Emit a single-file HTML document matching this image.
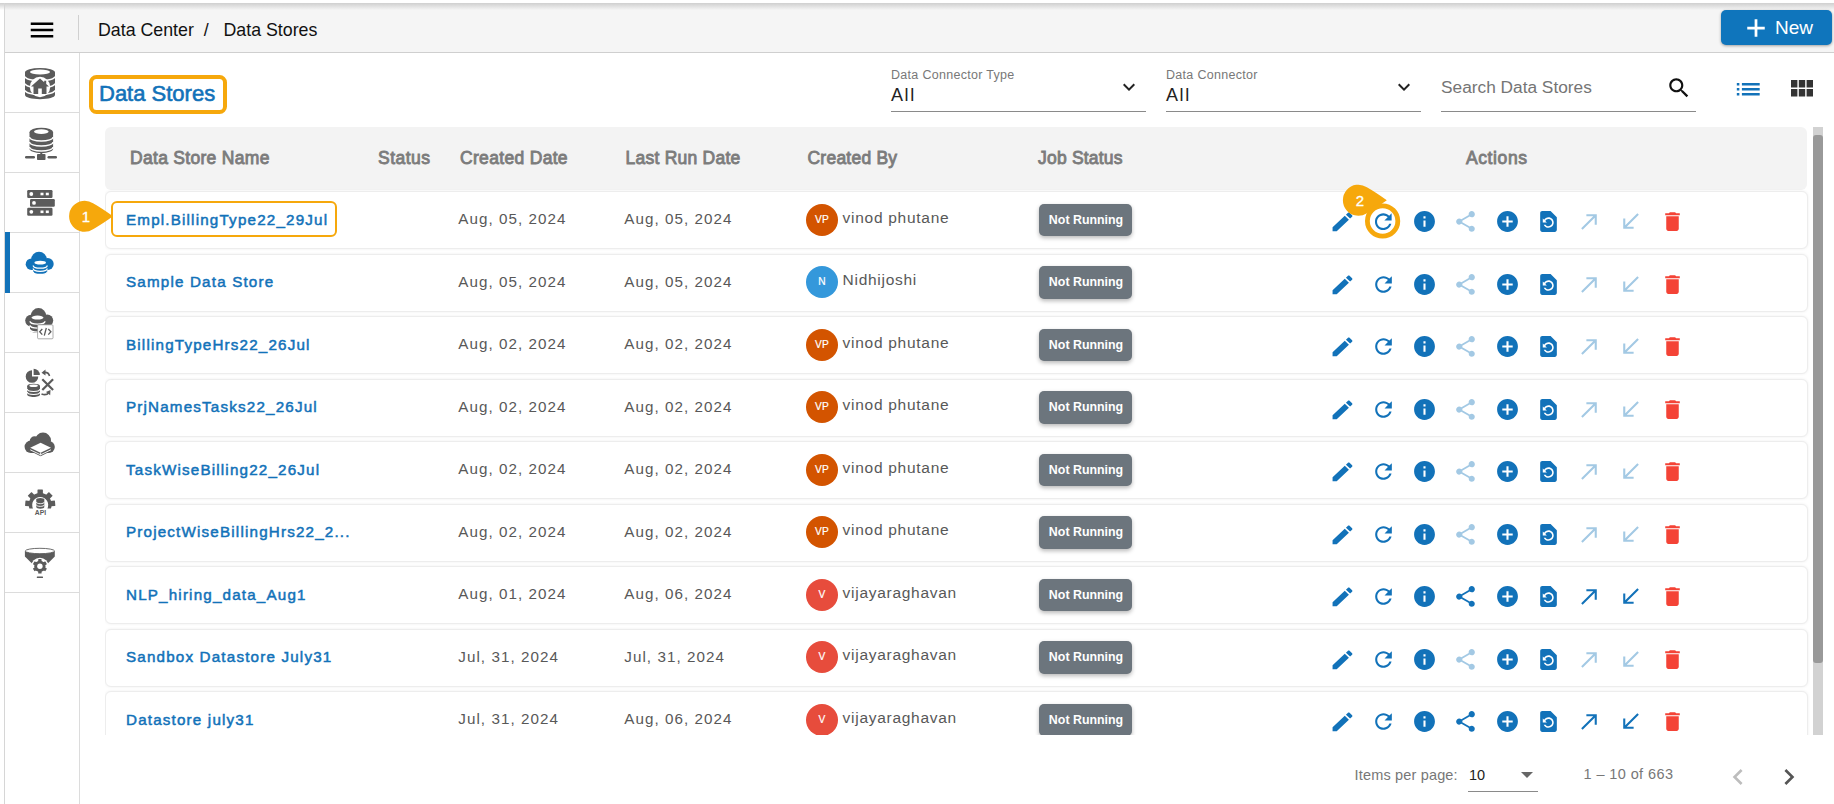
<!DOCTYPE html>
<html><head><meta charset="utf-8"><title>Data Stores</title>
<style>
*{box-sizing:border-box;margin:0;padding:0}
html,body{width:1834px;height:804px;overflow:hidden;background:#fff;font-family:"Liberation Sans",sans-serif;color:#212121}
.abs{position:absolute}
#top{position:absolute;left:5px;top:3px;width:1829px;height:50px;background:#f5f5f5;border-bottom:1px solid #cfcfcf}
#topsh{position:absolute;left:0;top:3px;width:1834px;height:7px;background:linear-gradient(#cfcfcf,rgba(245,245,245,0))}
#lline{position:absolute;left:4px;top:3px;width:1px;height:801px;background:#d6d6d6}
#crumb{position:absolute;left:98px;top:19px;font-size:17.8px;line-height:22px;color:#111;white-space:pre}
#vdiv{position:absolute;left:78px;top:15px;width:1px;height:25px;background:#d0d0d0}
#newb{position:absolute;left:1721px;top:10px;width:111px;height:35px;background:#0f75bc;border-radius:5px;box-shadow:0 1px 3px rgba(0,0,0,.35);color:#fff;font-size:19px}
#newb span{position:absolute;left:54px;top:7px;line-height:22px}
#side{position:absolute;left:5px;top:53px;width:75px;height:751px;border-right:1px solid #dcdcdc;background:#fff}
.si{position:absolute;left:0;width:74px;height:60px;border-bottom:1px solid #dcdcdc}
.si svg{position:absolute;left:0;top:0;width:74px;height:60px}
#title{position:absolute;left:89px;top:75px;width:138px;height:39px;border:4px solid #f6a80c;border-radius:7.5px;}
#title span{position:absolute;left:6px;top:2.3px;font-size:22px;line-height:26px;color:#1272b9;-webkit-text-stroke:.6px #1272b9;white-space:nowrap}
.fl{position:absolute;top:62px;width:255px;height:50px;border-bottom:1px solid #8a8a8a}
.fl .lb{position:absolute;left:0;top:6px;font-size:12.5px;line-height:15px;color:#787878;white-space:nowrap;letter-spacing:.3px}
.fl .vl{position:absolute;left:0;top:23px;font-size:18px;line-height:20px;color:#222;letter-spacing:1.6px}
.fl svg{position:absolute;right:5px;top:13px;width:24px;height:24px}
#srch .ph{position:absolute;left:0;top:15px;font-size:17.3px;line-height:20px;color:#757575;white-space:nowrap}
#thead{position:absolute;left:105px;top:127px;width:1702px;height:63px;background:#f3f3f3;border-radius:6px}
#thead span{position:absolute;top:21px;font-size:17.5px;line-height:20px;color:#7c7c7c;-webkit-text-stroke:.85px #7c7c7c;white-space:nowrap}
#rows{position:absolute;left:104.6px;top:0;width:1712px;height:735px;overflow:hidden}
#rows .in{position:absolute;left:0;top:0;width:1702px}
.row{position:absolute;left:0;width:1703.4px;height:58px;border:1px solid #ededed;border-radius:6px;background:#fff;box-shadow:0 0 3px rgba(0,0,0,.07)}
.row span{position:absolute;white-space:nowrap}
.nm{left:20.4px;top:17.3px;font-size:15.2px;line-height:20px;color:#1272b9;-webkit-text-stroke:.5px #1272b9;letter-spacing:1.18px}
.dt{top:17.2px;font-size:15.2px;line-height:20px;color:#585858;letter-spacing:1.05px}
.un{left:737px;top:15.4px;font-size:15.5px;line-height:20px;color:#585858;letter-spacing:.72px}
.av{left:700.3px;top:11.5px;width:32px;height:32px;border-radius:50%;color:#fff;font-size:10.2px;line-height:32px;text-align:center;-webkit-text-stroke:.2px #fff}
.bd{left:933.6px;top:11.6px;width:92.7px;height:32.2px;padding-left:1px;border-radius:5px;background:#6c757d;color:#fff;font-weight:bold;font-size:12.4px;line-height:33.5px;text-align:center;box-shadow:0 2px 4px rgba(0,0,0,.28)}
.ic{position:absolute;top:16.85px;overflow:visible;width:25px;height:25px}
#sbt{position:absolute;left:1813px;top:127px;width:9.6px;height:608px;background:#d2d2d2}
#sbh{position:absolute;left:1813px;top:134.5px;width:9.6px;height:528px;background:#999;border-radius:3px}
.mkn{position:absolute;width:40px;height:36px;font-size:15px;line-height:36px;text-align:center;color:#fff;-webkit-text-stroke:.3px #fff}
#pg span{position:absolute;font-size:14.5px;line-height:18px;color:#777;white-space:nowrap}
</style></head><body>
<div id="top"></div><div id="topsh"></div><div id="lline"></div>
<svg class="abs" style="left:27px;top:15px;width:30px;height:30px" viewBox="0 0 24 24" fill="#000"><path d="M3 18h18v-2H3v2zm0-5h18v-2H3v2zm0-7v2h18V6H3z"/></svg>
<div id="vdiv"></div>
<div id="crumb">Data Center  /   Data Stores</div>
<div id="newb"><svg class="abs" style="left:19.900px;top:2.900px;width:30px;height:30px" viewBox="0 0 24 24" fill="#fff"><path d="M19 13.100h-5.900v5.900h-2.200v-5.900H5v-2.200h5.900V5h2.200v5.900H19z"/></svg><span>New</span></div>
<div id="side">
<div class="si" style="top:0"><svg viewBox="0 0 74 60">
<g fill="#5b5b5b"><path d="M20 19.300v22.700c0 2.300 6.700 4.200 15 4.200s15-1.900 15-4.200V19.300z"/><ellipse cx="35" cy="19.300" rx="15" ry="4.300"/></g>
<ellipse cx="35" cy="19" rx="10" ry="2.500" fill="#fff"/>
<g fill="none" stroke="#fff" stroke-width="1.600"><path d="M20 23.600c0 2.300 6.700 4.200 15 4.200s15-1.900 15-4.200"/><path d="M20 30.600c0 2.300 6.700 4.200 15 4.200s15-1.900 15-4.200"/><path d="M20 37.200c0 2.300 6.700 4.200 15 4.200s15-1.900 15-4.200"/></g>
<circle cx="35" cy="34" r="10.200" fill="#fff"/>
<path fill="#5b5b5b" d="M35 25.500l-9 8h2.500v7.500h4.700v-5.500h3.600v5.500h4.700v-7.500h2.500l-2.800-2.500v-3.300h-2v1.500z"/>
</svg></div>
<div class="si" style="top:60px"><svg viewBox="0 0 74 60">
<g fill="#5b5b5b"><path d="M24.500 19v17c0 2.300 5.300 4 11.800 4s11.800-1.700 11.800-4V19z"/><ellipse cx="36.300" cy="19" rx="11.800" ry="4.300"/>
<rect x="35.300" y="38" width="2" height="5"/><rect x="32" y="41" width="8.500" height="6" rx="0.800"/><rect x="20" y="43" width="10" height="2.400" rx="1.200"/><rect x="42.500" y="43" width="9.500" height="2.400" rx="1.200"/></g>
<ellipse cx="36.300" cy="18.600" rx="7.300" ry="2.300" fill="#fff"/>
<g fill="none" stroke="#fff" stroke-width="1.400"><path d="M24.500 24c0 2.300 5.300 4 11.800 4s11.800-1.700 11.800-4"/><path d="M24.500 29c0 2.300 5.300 4 11.800 4s11.800-1.700 11.800-4"/><path d="M24.500 34c0 2.300 5.300 4 11.800 4s11.800-1.700 11.800-4"/></g>
</svg></div>
<div class="si" style="top:120px"><svg viewBox="0 0 74 60">
<g fill="#5b5b5b"><rect x="22.200" y="17" width="25.300" height="8" rx="1.200"/><rect x="25" y="26" width="24.800" height="7.800" rx="1.200"/><rect x="22.200" y="34.800" width="25.300" height="8" rx="1.200"/></g>
<g fill="#fff"><circle cx="26.300" cy="21" r="1.900"/><circle cx="29" cy="29.900" r="1.900"/><circle cx="26.300" cy="38.800" r="1.900"/><rect x="35.500" y="19.700" width="3" height="2.600"/><rect x="40.800" y="19.700" width="3" height="2.600"/><rect x="35.500" y="37.500" width="3" height="2.600"/><rect x="40.800" y="37.500" width="3" height="2.600"/></g>
</svg></div>
<div class="si" style="top:180px"><div class="abs" style="left:0;top:-1px;width:5px;height:61px;background:#1272b9"></div><svg viewBox="0 0 74 60">
<g fill="#1272b9"><circle cx="26.500" cy="31.200" r="5.800"/><circle cx="34" cy="26.500" r="7.800"/><circle cx="42.700" cy="31" r="6"/><rect x="26.500" y="30" width="16.200" height="7"/></g>
<g fill="#1272b9"><path d="M28.200 30v9c0 1.500 3.100 2.700 7 2.700s7-1.200 7-2.700V30z"/></g>
<ellipse cx="35.200" cy="29.700" rx="5.800" ry="1.900" fill="#fff"/>
<g fill="none" stroke="#fff" stroke-width="1.300"><path d="M28.200 32.500c0 1.500 3.100 2.700 7 2.700s7-1.200 7-2.700"/><path d="M28.200 35.600c0 1.500 3.100 2.700 7 2.700s7-1.200 7-2.700"/><path d="M28.200 38.700c0 1.500 3.100 2.700 7 2.700s7-1.200 7-2.700"/></g>
</svg></div>
<div class="si" style="top:240px"><svg viewBox="0 0 74 60">
<g fill="#5b5b5b"><circle cx="26" cy="27.600" r="5.800"/><circle cx="33.500" cy="22.900" r="7.800"/><circle cx="42.200" cy="27.400" r="6"/><rect x="26" y="26.400" width="16.200" height="7"/></g>
<path fill="#5b5b5b" d="M25 25v12c0 1.600 3.400 2.900 7.500 2.900s7.500-1.300 7.500-2.900V25z"/>
<ellipse cx="32.500" cy="24.600" rx="6" ry="2" fill="#fff"/>
<g fill="none" stroke="#fff" stroke-width="1.300"><path d="M25 28.300c0 1.600 3.400 2.900 7.500 2.900s7.500-1.300 7.500-2.900"/><path d="M25 32.300c0 1.600 3.400 2.900 7.500 2.900s7.500-1.300 7.500-2.900"/><path d="M25 36.300c0 1.600 3.400 2.900 7.500 2.900s7.500-1.300 7.500-2.900"/></g>
<rect x="32.600" y="31.800" width="15.400" height="14" rx="1" fill="#fff" stroke="#8a8a8a" stroke-width="0.700"/>
<g fill="none" stroke="#5b5b5b" stroke-width="1.300"><path d="M37.300 36l-2.600 2.800l2.600 2.800"/><path d="M43.300 36l2.600 2.800l-2.600 2.800"/><path d="M41.300 35l-2 7.600"/></g>
</svg></div>
<div class="si" style="top:300px"><svg viewBox="0 0 74 60">
<path fill="#5b5b5b" d="M27 17.200v6.300h6.300a6.300 6.300 0 1 1-6.300-6.300z"/><path fill="#5b5b5b" d="M28.600 15.800a6.200 6.200 0 0 1 6.200 6.200h-6.200z"/>
<path fill="#5b5b5b" d="M22.200 33v8.500c0 1.400 2.900 2.500 6.400 2.500s6.400-1.100 6.400-2.500V33z"/><ellipse cx="28.600" cy="33" rx="6.400" ry="2.300" fill="#5b5b5b"/>
<ellipse cx="28.600" cy="32.800" rx="4.300" ry="1.200" fill="#fff"/>
<g fill="none" stroke="#fff" stroke-width="1.100"><path d="M22.200 36c0 1.400 2.900 2.500 6.400 2.500s6.400-1.100 6.400-2.500"/><path d="M22.200 39c0 1.400 2.900 2.500 6.400 2.500s6.400-1.100 6.400-2.500"/></g>
<g fill="none" stroke="#5b5b5b" stroke-width="2.200"><path d="M37.300 26.200l10.800 10.800M48.100 26.200l-10.800 10.800"/></g>
<g fill="none" stroke="#5b5b5b" stroke-width="1.600"><path d="M38.500 19.500c3.500-.5 5.500 1 6 3.500"/><path d="M44 39.500c-2 2.500-5 2.500-7.500 1.500"/></g>
<path fill="#5b5b5b" d="M36.500 19.700l4-3.200v6z"/><path fill="#5b5b5b" d="M45.500 37l-.3 5.200l-4.300-3.200z"/>
</svg></div>
<div class="si" style="top:360px"><svg viewBox="0 0 74 60">
<g fill="#5b5b5b"><circle cx="25.800" cy="33.800" r="6.200"/><circle cx="29.700" cy="28.300" r="5"/><circle cx="38" cy="27.600" r="8"/><circle cx="43.800" cy="34" r="6"/><rect x="25.800" y="32" width="18" height="8"/><path d="M25 38l10.600 5.200l10.600-5.200z"/></g>
<path fill="#fff" d="M35.600 29.800l10.400 5l-10.400 5l-10.400-5z"/>
<path fill="none" stroke="#fff" stroke-width="0.900" d="M25.200 36.800l10.400 5l10.400-5M35.600 39.800v2.500"/>
</svg></div>
<div class="si" style="top:420px"><svg viewBox="0 0 74 60">
<g transform="translate(35.200,31.500)" fill="#5b5b5b">
<path d="M-10.800 4a11.500 11.500 0 1 1 21.600 0h-3.600a8 8 0 1 0-14.400 0z"/>
<rect x="-2.700" y="-15" width="5.400" height="5" rx=".4"/>
<rect x="-2.700" y="-15" width="5.400" height="5" rx=".4" transform="rotate(45)"/>
<rect x="-2.700" y="-15" width="5.400" height="5" rx=".4" transform="rotate(-45)"/>
<rect x="-2.700" y="-15" width="5.400" height="5" rx=".4" transform="rotate(85)"/>
<rect x="-2.700" y="-15" width="5.400" height="5" rx=".4" transform="rotate(-85)"/>
</g>
<path fill="#5b5b5b" d="M31.300 26.500v7.500c0 1 1.800 1.700 4 1.700s4-.7 4-1.700v-7.500z"/><ellipse cx="35.300" cy="26.500" rx="4" ry="1.500" fill="#5b5b5b"/>
<g fill="none" stroke="#fff" stroke-width=".9"><path d="M31.300 29c0 1 1.800 1.700 4 1.700s4-.7 4-1.700"/><path d="M31.300 31.700c0 1 1.800 1.700 4 1.700s4-.7 4-1.700"/></g>
<text x="35.500" y="42.300" style="font-family:'Liberation Sans',sans-serif" font-size="6.800" font-weight="bold" fill="#5b5b5b" text-anchor="middle">API</text>
</svg></div>
<div class="si" style="top:480px"><svg viewBox="0 0 74 60">
<path fill="#5b5b5b" d="M19.900 18v5.500l8.600 8.500h12.800l8.500-8.500V18z"/>
<ellipse cx="34.900" cy="18" rx="14.600" ry="2.700" fill="#fff" stroke="#5b5b5b" stroke-width=".9"/>
<circle cx="34.900" cy="33.500" r="8.800" fill="#fff"/>
<g transform="translate(34.900,33.300)"><g fill="#5b5b5b"><circle r="5.600"/>
<rect x="-1.700" y="-7.200" width="3.400" height="14.400" rx=".6"/><rect x="-1.700" y="-7.200" width="3.400" height="14.400" rx=".6" transform="rotate(60)"/><rect x="-1.700" y="-7.200" width="3.400" height="14.400" rx=".6" transform="rotate(120)"/></g><circle r="2.700" fill="#fff"/></g>
<rect x="31.800" y="43.500" width="6.200" height="1.600" rx=".5" fill="#5b5b5b"/>
</svg></div>

</div>
<div id="title"><span>Data Stores</span></div>
<div class="fl" style="left:891px"><span class="lb">Data Connector Type</span><span class="vl">All</span><svg viewBox="0 0 24 24" fill="#222"><path d="M16.59 8.59L12 13.17 7.41 8.59 6 10l6 6 6-6z"/></svg></div>
<div class="fl" style="left:1166px"><span class="lb">Data Connector</span><span class="vl">All</span><svg viewBox="0 0 24 24" fill="#222"><path d="M16.59 8.59L12 13.17 7.41 8.59 6 10l6 6 6-6z"/></svg></div>
<div class="fl" id="srch" style="left:1441px"><span class="ph">Search Data Stores</span><svg viewBox="0 0 24 24" fill="#111" style="left:224.800px;top:13.400px;width:26px;height:26px"><path d="M15.5 14h-.79l-.28-.27C15.41 12.59 16 11.11 16 9.5 16 5.91 13.09 3 9.5 3S3 5.91 3 9.5 5.91 16 9.5 16c1.61 0 3.09-.59 4.23-1.57l.27.28v.79l5 4.99L20.49 19l-4.99-5zm-6 0C7.01 14 5 11.99 5 9.5S7.01 5 9.5 5 14 7.01 14 9.5 11.99 14 9.5 14z"/></svg></div>
<svg class="abs" style="left:1733.200px;top:73.800px;width:30.500px;height:30.500px" viewBox="0 0 24 24" fill="#1272b9"><path d="M3 13h2v-2H3v2zm0 4h2v-2H3v2zm0-8h2V7H3v2zm4 4h14v-2H7v2zm0 4h14v-2H7v2zM7 7v2h14V7H7z"/></svg>
<svg class="abs" style="left:1791px;top:78px;width:22px;height:22px" viewBox="0 0 22 22" fill="#333"><rect x="0" y="2" width="6.4" height="7.500"/><rect x="7.800" y="2" width="6.400" height="7.500"/><rect x="15.600" y="2" width="6.400" height="7.500"/><rect x="0" y="11" width="6.400" height="7.500"/><rect x="7.800" y="11" width="6.400" height="7.500"/><rect x="15.600" y="11" width="6.400" height="7.500"/></svg>
<div id="thead"><span style="left:25px;letter-spacing:0.3px">Data Store Name</span><span style="left:273px;letter-spacing:0.48px">Status</span><span style="left:355px;letter-spacing:0.32px">Created Date</span><span style="left:520.500px;letter-spacing:0.24px">Last Run Date</span><span style="left:702.500px;letter-spacing:0.23px">Created By</span><span style="left:933px;letter-spacing:0.2px">Job Status</span><span style="left:1361px;letter-spacing:0.6px">Actions</span></div>
<div id="rows"><div class="in">
<div class="row" style="top:191.3px">
<span class="nm">Empl.BillingType22_29Jul</span>
<span class="dt" style="left:352.7px">Aug, 05, 2024</span>
<span class="dt" style="left:518.7px">Aug, 05, 2024</span>
<span class="av" style="background:#d35400">VP</span>
<span class="un">vinod phutane</span>
<span class="bd">Not Running</span>
<svg class="ic" style="left:1223.95px" viewBox="0 0 24 24" fill="#1272b9"><path transform="translate(-0.72 0.3) scale(1.06 1)" d="M3 17.25V21h3.75L17.81 9.94l-3.75-3.75L3 17.25zM20.71 7.04c.39-.39.39-1.02 0-1.41l-2.34-2.34c-.39-.39-1.02-.39-1.41 0l-1.83 1.83 3.75 3.75 1.83-1.83z"/></svg>
<svg class="ic" style="left:1265.20px" viewBox="0 0 24 24" fill="#1272b9"><path d="M17.65 6.35C16.2 4.9 14.21 4 12 4c-4.42 0-7.99 3.58-7.99 8s3.57 8 7.99 8c3.73 0 6.84-2.55 7.73-6h-2.08c-.82 2.33-3.04 4-5.65 4-3.31 0-6-2.69-6-6s2.69-6 6-6c1.66 0 3.14.69 4.22 1.78L13 11h7V4l-2.35 2.35z"/></svg>
<svg class="ic" style="left:1306.45px" viewBox="0 0 24 24" fill="#1272b9"><path d="M12 2C6.48 2 2 6.48 2 12s4.48 10 10 10 10-4.48 10-10S17.52 2 12 2zm1 15h-2v-6h2v6zm0-8h-2V7h2v2z"/></svg>
<svg class="ic" style="left:1347.70px" viewBox="0 0 24 24" fill="#a3c9e4"><path d="M18 16.08c-.76 0-1.44.3-1.96.77L8.91 12.7c.05-.23.09-.46.09-.7s-.04-.47-.09-.7l7.05-4.11c.54.5 1.25.81 2.04.81 1.66 0 3-1.34 3-3s-1.34-3-3-3-3 1.34-3 3c0 .24.04.47.09.7L8.04 9.81C7.5 9.31 6.79 9 6 9c-1.66 0-3 1.34-3 3s1.34 3 3 3c.79 0 1.5-.31 2.04-.81l7.12 4.16c-.05.21-.08.43-.08.65 0 1.61 1.31 2.92 2.92 2.92 1.61 0 2.92-1.31 2.92-2.92s-1.31-2.92-2.92-2.92z"/></svg>
<svg class="ic" style="left:1388.95px" viewBox="0 0 24 24" fill="#1272b9"><path d="M12 2C6.48 2 2 6.48 2 12s4.48 10 10 10 10-4.48 10-10S17.52 2 12 2zm5 11h-4v4h-2v-4H7v-2h4V7h2v4h4v2z"/></svg>
<svg class="ic" style="left:1430.20px" viewBox="0 0 24 24" fill="#1272b9"><path d="M14 2H6c-1.1 0-1.99.9-1.99 2L4 20c0 1.1.89 2 1.99 2H18c1.1 0 2-.9 2-2V8l-6-6zm-2 16c-2.05 0-3.81-1.24-4.58-3h1.71c.63.9 1.68 1.5 2.87 1.5 1.93 0 3.5-1.57 3.5-3.5S13.93 9.5 12 9.5c-1.35 0-2.52.78-3.1 1.9l1.6 1.6h-4V9l1.3 1.3C8.69 8.92 10.23 8 12 8c2.76 0 5 2.24 5 5s-2.24 5-5 5z"/></svg>
<svg class="ic" style="left:1471.45px" viewBox="0 0 24 24" fill="#a3c9e4"><path d="M9 5v2h6.59L4 18.59 5.41 20 17 8.41V15h2V5z"/></svg>
<svg class="ic" style="left:1512.70px" viewBox="0 0 24 24" fill="#a3c9e4"><path d="M20 5.41L18.59 4 7 15.59V9H5v10h10v-2H8.41z"/></svg>
<svg class="ic" style="left:1553.95px" viewBox="0 0 24 24" fill="#f44336"><path d="M6 19c0 1.1.9 2 2 2h8c1.1 0 2-.9 2-2V7H6v12zM19 4h-3.5l-1-1h-5l-1 1H5v2h14V4z"/></svg>
</div>
<div class="row" style="top:253.8px">
<span class="nm">Sample Data Store</span>
<span class="dt" style="left:352.7px">Aug, 05, 2024</span>
<span class="dt" style="left:518.7px">Aug, 05, 2024</span>
<span class="av" style="background:#3498db">N</span>
<span class="un">Nidhijoshi</span>
<span class="bd">Not Running</span>
<svg class="ic" style="left:1223.95px" viewBox="0 0 24 24" fill="#1272b9"><path transform="translate(-0.72 0.3) scale(1.06 1)" d="M3 17.25V21h3.75L17.81 9.94l-3.75-3.75L3 17.25zM20.71 7.04c.39-.39.39-1.02 0-1.41l-2.34-2.34c-.39-.39-1.02-.39-1.41 0l-1.83 1.83 3.75 3.75 1.83-1.83z"/></svg>
<svg class="ic" style="left:1265.20px" viewBox="0 0 24 24" fill="#1272b9"><path d="M17.65 6.35C16.2 4.9 14.21 4 12 4c-4.42 0-7.99 3.58-7.99 8s3.57 8 7.99 8c3.73 0 6.84-2.55 7.73-6h-2.08c-.82 2.33-3.04 4-5.65 4-3.31 0-6-2.69-6-6s2.69-6 6-6c1.66 0 3.14.69 4.22 1.78L13 11h7V4l-2.35 2.35z"/></svg>
<svg class="ic" style="left:1306.45px" viewBox="0 0 24 24" fill="#1272b9"><path d="M12 2C6.48 2 2 6.48 2 12s4.48 10 10 10 10-4.48 10-10S17.52 2 12 2zm1 15h-2v-6h2v6zm0-8h-2V7h2v2z"/></svg>
<svg class="ic" style="left:1347.70px" viewBox="0 0 24 24" fill="#a3c9e4"><path d="M18 16.08c-.76 0-1.44.3-1.96.77L8.91 12.7c.05-.23.09-.46.09-.7s-.04-.47-.09-.7l7.05-4.11c.54.5 1.25.81 2.04.81 1.66 0 3-1.34 3-3s-1.34-3-3-3-3 1.34-3 3c0 .24.04.47.09.7L8.04 9.81C7.5 9.31 6.79 9 6 9c-1.66 0-3 1.34-3 3s1.34 3 3 3c.79 0 1.5-.31 2.04-.81l7.12 4.16c-.05.21-.08.43-.08.65 0 1.61 1.31 2.92 2.92 2.92 1.61 0 2.92-1.31 2.92-2.92s-1.31-2.92-2.92-2.92z"/></svg>
<svg class="ic" style="left:1388.95px" viewBox="0 0 24 24" fill="#1272b9"><path d="M12 2C6.48 2 2 6.48 2 12s4.48 10 10 10 10-4.48 10-10S17.52 2 12 2zm5 11h-4v4h-2v-4H7v-2h4V7h2v4h4v2z"/></svg>
<svg class="ic" style="left:1430.20px" viewBox="0 0 24 24" fill="#1272b9"><path d="M14 2H6c-1.1 0-1.99.9-1.99 2L4 20c0 1.1.89 2 1.99 2H18c1.1 0 2-.9 2-2V8l-6-6zm-2 16c-2.05 0-3.81-1.24-4.58-3h1.71c.63.9 1.68 1.5 2.87 1.5 1.93 0 3.5-1.57 3.5-3.5S13.93 9.5 12 9.5c-1.35 0-2.52.78-3.1 1.9l1.6 1.6h-4V9l1.3 1.3C8.69 8.92 10.23 8 12 8c2.76 0 5 2.24 5 5s-2.24 5-5 5z"/></svg>
<svg class="ic" style="left:1471.45px" viewBox="0 0 24 24" fill="#a3c9e4"><path d="M9 5v2h6.59L4 18.59 5.41 20 17 8.41V15h2V5z"/></svg>
<svg class="ic" style="left:1512.70px" viewBox="0 0 24 24" fill="#a3c9e4"><path d="M20 5.41L18.59 4 7 15.59V9H5v10h10v-2H8.41z"/></svg>
<svg class="ic" style="left:1553.95px" viewBox="0 0 24 24" fill="#f44336"><path d="M6 19c0 1.1.9 2 2 2h8c1.1 0 2-.9 2-2V7H6v12zM19 4h-3.5l-1-1h-5l-1 1H5v2h14V4z"/></svg>
</div>
<div class="row" style="top:316.3px">
<span class="nm">BillingTypeHrs22_26Jul</span>
<span class="dt" style="left:352.7px">Aug, 02, 2024</span>
<span class="dt" style="left:518.7px">Aug, 02, 2024</span>
<span class="av" style="background:#d35400">VP</span>
<span class="un">vinod phutane</span>
<span class="bd">Not Running</span>
<svg class="ic" style="left:1223.95px" viewBox="0 0 24 24" fill="#1272b9"><path transform="translate(-0.72 0.3) scale(1.06 1)" d="M3 17.25V21h3.75L17.81 9.94l-3.75-3.75L3 17.25zM20.71 7.04c.39-.39.39-1.02 0-1.41l-2.34-2.34c-.39-.39-1.02-.39-1.41 0l-1.83 1.83 3.75 3.75 1.83-1.83z"/></svg>
<svg class="ic" style="left:1265.20px" viewBox="0 0 24 24" fill="#1272b9"><path d="M17.65 6.35C16.2 4.9 14.21 4 12 4c-4.42 0-7.99 3.58-7.99 8s3.57 8 7.99 8c3.73 0 6.84-2.55 7.73-6h-2.08c-.82 2.33-3.04 4-5.65 4-3.31 0-6-2.69-6-6s2.69-6 6-6c1.66 0 3.14.69 4.22 1.78L13 11h7V4l-2.35 2.35z"/></svg>
<svg class="ic" style="left:1306.45px" viewBox="0 0 24 24" fill="#1272b9"><path d="M12 2C6.48 2 2 6.48 2 12s4.48 10 10 10 10-4.48 10-10S17.52 2 12 2zm1 15h-2v-6h2v6zm0-8h-2V7h2v2z"/></svg>
<svg class="ic" style="left:1347.70px" viewBox="0 0 24 24" fill="#a3c9e4"><path d="M18 16.08c-.76 0-1.44.3-1.96.77L8.91 12.7c.05-.23.09-.46.09-.7s-.04-.47-.09-.7l7.05-4.11c.54.5 1.25.81 2.04.81 1.66 0 3-1.34 3-3s-1.34-3-3-3-3 1.34-3 3c0 .24.04.47.09.7L8.04 9.81C7.5 9.31 6.79 9 6 9c-1.66 0-3 1.34-3 3s1.34 3 3 3c.79 0 1.5-.31 2.04-.81l7.12 4.16c-.05.21-.08.43-.08.65 0 1.61 1.31 2.92 2.92 2.92 1.61 0 2.92-1.31 2.92-2.92s-1.31-2.92-2.92-2.92z"/></svg>
<svg class="ic" style="left:1388.95px" viewBox="0 0 24 24" fill="#1272b9"><path d="M12 2C6.48 2 2 6.48 2 12s4.48 10 10 10 10-4.48 10-10S17.52 2 12 2zm5 11h-4v4h-2v-4H7v-2h4V7h2v4h4v2z"/></svg>
<svg class="ic" style="left:1430.20px" viewBox="0 0 24 24" fill="#1272b9"><path d="M14 2H6c-1.1 0-1.99.9-1.99 2L4 20c0 1.1.89 2 1.99 2H18c1.1 0 2-.9 2-2V8l-6-6zm-2 16c-2.05 0-3.81-1.24-4.58-3h1.71c.63.9 1.68 1.5 2.87 1.5 1.93 0 3.5-1.57 3.5-3.5S13.93 9.5 12 9.5c-1.35 0-2.52.78-3.1 1.9l1.6 1.6h-4V9l1.3 1.3C8.69 8.92 10.23 8 12 8c2.76 0 5 2.24 5 5s-2.24 5-5 5z"/></svg>
<svg class="ic" style="left:1471.45px" viewBox="0 0 24 24" fill="#a3c9e4"><path d="M9 5v2h6.59L4 18.59 5.41 20 17 8.41V15h2V5z"/></svg>
<svg class="ic" style="left:1512.70px" viewBox="0 0 24 24" fill="#a3c9e4"><path d="M20 5.41L18.59 4 7 15.59V9H5v10h10v-2H8.41z"/></svg>
<svg class="ic" style="left:1553.95px" viewBox="0 0 24 24" fill="#f44336"><path d="M6 19c0 1.1.9 2 2 2h8c1.1 0 2-.9 2-2V7H6v12zM19 4h-3.5l-1-1h-5l-1 1H5v2h14V4z"/></svg>
</div>
<div class="row" style="top:378.8px">
<span class="nm">PrjNamesTasks22_26Jul</span>
<span class="dt" style="left:352.7px">Aug, 02, 2024</span>
<span class="dt" style="left:518.7px">Aug, 02, 2024</span>
<span class="av" style="background:#d35400">VP</span>
<span class="un">vinod phutane</span>
<span class="bd">Not Running</span>
<svg class="ic" style="left:1223.95px" viewBox="0 0 24 24" fill="#1272b9"><path transform="translate(-0.72 0.3) scale(1.06 1)" d="M3 17.25V21h3.75L17.81 9.94l-3.75-3.75L3 17.25zM20.71 7.04c.39-.39.39-1.02 0-1.41l-2.34-2.34c-.39-.39-1.02-.39-1.41 0l-1.83 1.83 3.75 3.75 1.83-1.83z"/></svg>
<svg class="ic" style="left:1265.20px" viewBox="0 0 24 24" fill="#1272b9"><path d="M17.65 6.35C16.2 4.9 14.21 4 12 4c-4.42 0-7.99 3.58-7.99 8s3.57 8 7.99 8c3.73 0 6.84-2.55 7.73-6h-2.08c-.82 2.33-3.04 4-5.65 4-3.31 0-6-2.69-6-6s2.69-6 6-6c1.66 0 3.14.69 4.22 1.78L13 11h7V4l-2.35 2.35z"/></svg>
<svg class="ic" style="left:1306.45px" viewBox="0 0 24 24" fill="#1272b9"><path d="M12 2C6.48 2 2 6.48 2 12s4.48 10 10 10 10-4.48 10-10S17.52 2 12 2zm1 15h-2v-6h2v6zm0-8h-2V7h2v2z"/></svg>
<svg class="ic" style="left:1347.70px" viewBox="0 0 24 24" fill="#a3c9e4"><path d="M18 16.08c-.76 0-1.44.3-1.96.77L8.91 12.7c.05-.23.09-.46.09-.7s-.04-.47-.09-.7l7.05-4.11c.54.5 1.25.81 2.04.81 1.66 0 3-1.34 3-3s-1.34-3-3-3-3 1.34-3 3c0 .24.04.47.09.7L8.04 9.81C7.5 9.31 6.79 9 6 9c-1.66 0-3 1.34-3 3s1.34 3 3 3c.79 0 1.5-.31 2.04-.81l7.12 4.16c-.05.21-.08.43-.08.65 0 1.61 1.31 2.92 2.92 2.92 1.61 0 2.92-1.31 2.92-2.92s-1.31-2.92-2.92-2.92z"/></svg>
<svg class="ic" style="left:1388.95px" viewBox="0 0 24 24" fill="#1272b9"><path d="M12 2C6.48 2 2 6.48 2 12s4.48 10 10 10 10-4.48 10-10S17.52 2 12 2zm5 11h-4v4h-2v-4H7v-2h4V7h2v4h4v2z"/></svg>
<svg class="ic" style="left:1430.20px" viewBox="0 0 24 24" fill="#1272b9"><path d="M14 2H6c-1.1 0-1.99.9-1.99 2L4 20c0 1.1.89 2 1.99 2H18c1.1 0 2-.9 2-2V8l-6-6zm-2 16c-2.05 0-3.81-1.24-4.58-3h1.71c.63.9 1.68 1.5 2.87 1.5 1.93 0 3.5-1.57 3.5-3.5S13.93 9.5 12 9.5c-1.35 0-2.52.78-3.1 1.9l1.6 1.6h-4V9l1.3 1.3C8.69 8.92 10.23 8 12 8c2.76 0 5 2.24 5 5s-2.24 5-5 5z"/></svg>
<svg class="ic" style="left:1471.45px" viewBox="0 0 24 24" fill="#a3c9e4"><path d="M9 5v2h6.59L4 18.59 5.41 20 17 8.41V15h2V5z"/></svg>
<svg class="ic" style="left:1512.70px" viewBox="0 0 24 24" fill="#a3c9e4"><path d="M20 5.41L18.59 4 7 15.59V9H5v10h10v-2H8.41z"/></svg>
<svg class="ic" style="left:1553.95px" viewBox="0 0 24 24" fill="#f44336"><path d="M6 19c0 1.1.9 2 2 2h8c1.1 0 2-.9 2-2V7H6v12zM19 4h-3.5l-1-1h-5l-1 1H5v2h14V4z"/></svg>
</div>
<div class="row" style="top:441.3px">
<span class="nm">TaskWiseBilling22_26Jul</span>
<span class="dt" style="left:352.7px">Aug, 02, 2024</span>
<span class="dt" style="left:518.7px">Aug, 02, 2024</span>
<span class="av" style="background:#d35400">VP</span>
<span class="un">vinod phutane</span>
<span class="bd">Not Running</span>
<svg class="ic" style="left:1223.95px" viewBox="0 0 24 24" fill="#1272b9"><path transform="translate(-0.72 0.3) scale(1.06 1)" d="M3 17.25V21h3.75L17.81 9.94l-3.75-3.75L3 17.25zM20.71 7.04c.39-.39.39-1.02 0-1.41l-2.34-2.34c-.39-.39-1.02-.39-1.41 0l-1.83 1.83 3.75 3.75 1.83-1.83z"/></svg>
<svg class="ic" style="left:1265.20px" viewBox="0 0 24 24" fill="#1272b9"><path d="M17.65 6.35C16.2 4.9 14.21 4 12 4c-4.42 0-7.99 3.58-7.99 8s3.57 8 7.99 8c3.73 0 6.84-2.55 7.73-6h-2.08c-.82 2.33-3.04 4-5.65 4-3.31 0-6-2.69-6-6s2.69-6 6-6c1.66 0 3.14.69 4.22 1.78L13 11h7V4l-2.35 2.35z"/></svg>
<svg class="ic" style="left:1306.45px" viewBox="0 0 24 24" fill="#1272b9"><path d="M12 2C6.48 2 2 6.48 2 12s4.48 10 10 10 10-4.48 10-10S17.52 2 12 2zm1 15h-2v-6h2v6zm0-8h-2V7h2v2z"/></svg>
<svg class="ic" style="left:1347.70px" viewBox="0 0 24 24" fill="#a3c9e4"><path d="M18 16.08c-.76 0-1.44.3-1.96.77L8.91 12.7c.05-.23.09-.46.09-.7s-.04-.47-.09-.7l7.05-4.11c.54.5 1.25.81 2.04.81 1.66 0 3-1.34 3-3s-1.34-3-3-3-3 1.34-3 3c0 .24.04.47.09.7L8.04 9.81C7.5 9.31 6.79 9 6 9c-1.66 0-3 1.34-3 3s1.34 3 3 3c.79 0 1.5-.31 2.04-.81l7.12 4.16c-.05.21-.08.43-.08.65 0 1.61 1.31 2.92 2.92 2.92 1.61 0 2.92-1.31 2.92-2.92s-1.31-2.92-2.92-2.92z"/></svg>
<svg class="ic" style="left:1388.95px" viewBox="0 0 24 24" fill="#1272b9"><path d="M12 2C6.48 2 2 6.48 2 12s4.48 10 10 10 10-4.48 10-10S17.52 2 12 2zm5 11h-4v4h-2v-4H7v-2h4V7h2v4h4v2z"/></svg>
<svg class="ic" style="left:1430.20px" viewBox="0 0 24 24" fill="#1272b9"><path d="M14 2H6c-1.1 0-1.99.9-1.99 2L4 20c0 1.1.89 2 1.99 2H18c1.1 0 2-.9 2-2V8l-6-6zm-2 16c-2.05 0-3.81-1.24-4.58-3h1.71c.63.9 1.68 1.5 2.87 1.5 1.93 0 3.5-1.57 3.5-3.5S13.93 9.5 12 9.5c-1.35 0-2.52.78-3.1 1.9l1.6 1.6h-4V9l1.3 1.3C8.69 8.92 10.23 8 12 8c2.76 0 5 2.24 5 5s-2.24 5-5 5z"/></svg>
<svg class="ic" style="left:1471.45px" viewBox="0 0 24 24" fill="#a3c9e4"><path d="M9 5v2h6.59L4 18.59 5.41 20 17 8.41V15h2V5z"/></svg>
<svg class="ic" style="left:1512.70px" viewBox="0 0 24 24" fill="#a3c9e4"><path d="M20 5.41L18.59 4 7 15.59V9H5v10h10v-2H8.41z"/></svg>
<svg class="ic" style="left:1553.95px" viewBox="0 0 24 24" fill="#f44336"><path d="M6 19c0 1.1.9 2 2 2h8c1.1 0 2-.9 2-2V7H6v12zM19 4h-3.5l-1-1h-5l-1 1H5v2h14V4z"/></svg>
</div>
<div class="row" style="top:503.8px">
<span class="nm">ProjectWiseBillingHrs22_2...</span>
<span class="dt" style="left:352.7px">Aug, 02, 2024</span>
<span class="dt" style="left:518.7px">Aug, 02, 2024</span>
<span class="av" style="background:#d35400">VP</span>
<span class="un">vinod phutane</span>
<span class="bd">Not Running</span>
<svg class="ic" style="left:1223.95px" viewBox="0 0 24 24" fill="#1272b9"><path transform="translate(-0.72 0.3) scale(1.06 1)" d="M3 17.25V21h3.75L17.81 9.94l-3.75-3.75L3 17.25zM20.71 7.04c.39-.39.39-1.02 0-1.41l-2.34-2.34c-.39-.39-1.02-.39-1.41 0l-1.83 1.83 3.75 3.75 1.83-1.83z"/></svg>
<svg class="ic" style="left:1265.20px" viewBox="0 0 24 24" fill="#1272b9"><path d="M17.65 6.35C16.2 4.9 14.21 4 12 4c-4.42 0-7.99 3.58-7.99 8s3.57 8 7.99 8c3.73 0 6.84-2.55 7.73-6h-2.08c-.82 2.33-3.04 4-5.65 4-3.31 0-6-2.69-6-6s2.69-6 6-6c1.66 0 3.14.69 4.22 1.78L13 11h7V4l-2.35 2.35z"/></svg>
<svg class="ic" style="left:1306.45px" viewBox="0 0 24 24" fill="#1272b9"><path d="M12 2C6.48 2 2 6.48 2 12s4.48 10 10 10 10-4.48 10-10S17.52 2 12 2zm1 15h-2v-6h2v6zm0-8h-2V7h2v2z"/></svg>
<svg class="ic" style="left:1347.70px" viewBox="0 0 24 24" fill="#a3c9e4"><path d="M18 16.08c-.76 0-1.44.3-1.96.77L8.91 12.7c.05-.23.09-.46.09-.7s-.04-.47-.09-.7l7.05-4.11c.54.5 1.25.81 2.04.81 1.66 0 3-1.34 3-3s-1.34-3-3-3-3 1.34-3 3c0 .24.04.47.09.7L8.04 9.81C7.5 9.31 6.79 9 6 9c-1.66 0-3 1.34-3 3s1.34 3 3 3c.79 0 1.5-.31 2.04-.81l7.12 4.16c-.05.21-.08.43-.08.65 0 1.61 1.31 2.92 2.92 2.92 1.61 0 2.92-1.31 2.92-2.92s-1.31-2.92-2.92-2.92z"/></svg>
<svg class="ic" style="left:1388.95px" viewBox="0 0 24 24" fill="#1272b9"><path d="M12 2C6.48 2 2 6.48 2 12s4.48 10 10 10 10-4.48 10-10S17.52 2 12 2zm5 11h-4v4h-2v-4H7v-2h4V7h2v4h4v2z"/></svg>
<svg class="ic" style="left:1430.20px" viewBox="0 0 24 24" fill="#1272b9"><path d="M14 2H6c-1.1 0-1.99.9-1.99 2L4 20c0 1.1.89 2 1.99 2H18c1.1 0 2-.9 2-2V8l-6-6zm-2 16c-2.05 0-3.81-1.24-4.58-3h1.71c.63.9 1.68 1.5 2.87 1.5 1.93 0 3.5-1.57 3.5-3.5S13.93 9.5 12 9.5c-1.35 0-2.52.78-3.1 1.9l1.6 1.6h-4V9l1.3 1.3C8.69 8.92 10.23 8 12 8c2.76 0 5 2.24 5 5s-2.24 5-5 5z"/></svg>
<svg class="ic" style="left:1471.45px" viewBox="0 0 24 24" fill="#a3c9e4"><path d="M9 5v2h6.59L4 18.59 5.41 20 17 8.41V15h2V5z"/></svg>
<svg class="ic" style="left:1512.70px" viewBox="0 0 24 24" fill="#a3c9e4"><path d="M20 5.41L18.59 4 7 15.59V9H5v10h10v-2H8.41z"/></svg>
<svg class="ic" style="left:1553.95px" viewBox="0 0 24 24" fill="#f44336"><path d="M6 19c0 1.1.9 2 2 2h8c1.1 0 2-.9 2-2V7H6v12zM19 4h-3.5l-1-1h-5l-1 1H5v2h14V4z"/></svg>
</div>
<div class="row" style="top:566.3px">
<span class="nm">NLP_hiring_data_Aug1</span>
<span class="dt" style="left:352.7px">Aug, 01, 2024</span>
<span class="dt" style="left:518.7px">Aug, 06, 2024</span>
<span class="av" style="background:#e74c3c">V</span>
<span class="un">vijayaraghavan</span>
<span class="bd">Not Running</span>
<svg class="ic" style="left:1223.95px" viewBox="0 0 24 24" fill="#1272b9"><path transform="translate(-0.72 0.3) scale(1.06 1)" d="M3 17.25V21h3.75L17.81 9.94l-3.75-3.75L3 17.25zM20.71 7.04c.39-.39.39-1.02 0-1.41l-2.34-2.34c-.39-.39-1.02-.39-1.41 0l-1.83 1.83 3.75 3.75 1.83-1.83z"/></svg>
<svg class="ic" style="left:1265.20px" viewBox="0 0 24 24" fill="#1272b9"><path d="M17.65 6.35C16.2 4.9 14.21 4 12 4c-4.42 0-7.99 3.58-7.99 8s3.57 8 7.99 8c3.73 0 6.84-2.55 7.73-6h-2.08c-.82 2.33-3.04 4-5.65 4-3.31 0-6-2.69-6-6s2.69-6 6-6c1.66 0 3.14.69 4.22 1.78L13 11h7V4l-2.35 2.35z"/></svg>
<svg class="ic" style="left:1306.45px" viewBox="0 0 24 24" fill="#1272b9"><path d="M12 2C6.48 2 2 6.48 2 12s4.48 10 10 10 10-4.48 10-10S17.52 2 12 2zm1 15h-2v-6h2v6zm0-8h-2V7h2v2z"/></svg>
<svg class="ic" style="left:1347.70px" viewBox="0 0 24 24" fill="#1272b9"><path d="M18 16.08c-.76 0-1.44.3-1.96.77L8.91 12.7c.05-.23.09-.46.09-.7s-.04-.47-.09-.7l7.05-4.11c.54.5 1.25.81 2.04.81 1.66 0 3-1.34 3-3s-1.34-3-3-3-3 1.34-3 3c0 .24.04.47.09.7L8.04 9.81C7.5 9.31 6.79 9 6 9c-1.66 0-3 1.34-3 3s1.34 3 3 3c.79 0 1.5-.31 2.04-.81l7.12 4.16c-.05.21-.08.43-.08.65 0 1.61 1.31 2.92 2.92 2.92 1.61 0 2.92-1.31 2.92-2.92s-1.31-2.92-2.92-2.92z"/></svg>
<svg class="ic" style="left:1388.95px" viewBox="0 0 24 24" fill="#1272b9"><path d="M12 2C6.48 2 2 6.48 2 12s4.48 10 10 10 10-4.48 10-10S17.52 2 12 2zm5 11h-4v4h-2v-4H7v-2h4V7h2v4h4v2z"/></svg>
<svg class="ic" style="left:1430.20px" viewBox="0 0 24 24" fill="#1272b9"><path d="M14 2H6c-1.1 0-1.99.9-1.99 2L4 20c0 1.1.89 2 1.99 2H18c1.1 0 2-.9 2-2V8l-6-6zm-2 16c-2.05 0-3.81-1.24-4.58-3h1.71c.63.9 1.68 1.5 2.87 1.5 1.93 0 3.5-1.57 3.5-3.5S13.93 9.5 12 9.5c-1.35 0-2.52.78-3.1 1.9l1.6 1.6h-4V9l1.3 1.3C8.69 8.92 10.23 8 12 8c2.76 0 5 2.24 5 5s-2.24 5-5 5z"/></svg>
<svg class="ic" style="left:1471.45px" viewBox="0 0 24 24" fill="#1272b9"><path d="M9 5v2h6.59L4 18.59 5.41 20 17 8.41V15h2V5z"/></svg>
<svg class="ic" style="left:1512.70px" viewBox="0 0 24 24" fill="#1272b9"><path d="M20 5.41L18.59 4 7 15.59V9H5v10h10v-2H8.41z"/></svg>
<svg class="ic" style="left:1553.95px" viewBox="0 0 24 24" fill="#f44336"><path d="M6 19c0 1.1.9 2 2 2h8c1.1 0 2-.9 2-2V7H6v12zM19 4h-3.5l-1-1h-5l-1 1H5v2h14V4z"/></svg>
</div>
<div class="row" style="top:628.8px">
<span class="nm">Sandbox Datastore July31</span>
<span class="dt" style="left:352.7px">Jul, 31, 2024</span>
<span class="dt" style="left:518.7px">Jul, 31, 2024</span>
<span class="av" style="background:#e74c3c">V</span>
<span class="un">vijayaraghavan</span>
<span class="bd">Not Running</span>
<svg class="ic" style="left:1223.95px" viewBox="0 0 24 24" fill="#1272b9"><path transform="translate(-0.72 0.3) scale(1.06 1)" d="M3 17.25V21h3.75L17.81 9.94l-3.75-3.75L3 17.25zM20.71 7.04c.39-.39.39-1.02 0-1.41l-2.34-2.34c-.39-.39-1.02-.39-1.41 0l-1.83 1.83 3.75 3.75 1.83-1.83z"/></svg>
<svg class="ic" style="left:1265.20px" viewBox="0 0 24 24" fill="#1272b9"><path d="M17.65 6.35C16.2 4.9 14.21 4 12 4c-4.42 0-7.99 3.58-7.99 8s3.57 8 7.99 8c3.73 0 6.84-2.55 7.73-6h-2.08c-.82 2.33-3.04 4-5.65 4-3.31 0-6-2.69-6-6s2.69-6 6-6c1.66 0 3.14.69 4.22 1.78L13 11h7V4l-2.35 2.35z"/></svg>
<svg class="ic" style="left:1306.45px" viewBox="0 0 24 24" fill="#1272b9"><path d="M12 2C6.48 2 2 6.48 2 12s4.48 10 10 10 10-4.48 10-10S17.52 2 12 2zm1 15h-2v-6h2v6zm0-8h-2V7h2v2z"/></svg>
<svg class="ic" style="left:1347.70px" viewBox="0 0 24 24" fill="#a3c9e4"><path d="M18 16.08c-.76 0-1.44.3-1.96.77L8.91 12.7c.05-.23.09-.46.09-.7s-.04-.47-.09-.7l7.05-4.11c.54.5 1.25.81 2.04.81 1.66 0 3-1.34 3-3s-1.34-3-3-3-3 1.34-3 3c0 .24.04.47.09.7L8.04 9.81C7.5 9.31 6.79 9 6 9c-1.66 0-3 1.34-3 3s1.34 3 3 3c.79 0 1.5-.31 2.04-.81l7.12 4.16c-.05.21-.08.43-.08.65 0 1.61 1.31 2.92 2.92 2.92 1.61 0 2.92-1.31 2.92-2.92s-1.31-2.92-2.92-2.92z"/></svg>
<svg class="ic" style="left:1388.95px" viewBox="0 0 24 24" fill="#1272b9"><path d="M12 2C6.48 2 2 6.48 2 12s4.48 10 10 10 10-4.48 10-10S17.52 2 12 2zm5 11h-4v4h-2v-4H7v-2h4V7h2v4h4v2z"/></svg>
<svg class="ic" style="left:1430.20px" viewBox="0 0 24 24" fill="#1272b9"><path d="M14 2H6c-1.1 0-1.99.9-1.99 2L4 20c0 1.1.89 2 1.99 2H18c1.1 0 2-.9 2-2V8l-6-6zm-2 16c-2.05 0-3.81-1.24-4.58-3h1.71c.63.9 1.68 1.5 2.87 1.5 1.93 0 3.5-1.57 3.5-3.5S13.93 9.5 12 9.5c-1.35 0-2.52.78-3.1 1.9l1.6 1.6h-4V9l1.3 1.3C8.69 8.92 10.23 8 12 8c2.76 0 5 2.24 5 5s-2.24 5-5 5z"/></svg>
<svg class="ic" style="left:1471.45px" viewBox="0 0 24 24" fill="#a3c9e4"><path d="M9 5v2h6.59L4 18.59 5.41 20 17 8.41V15h2V5z"/></svg>
<svg class="ic" style="left:1512.70px" viewBox="0 0 24 24" fill="#a3c9e4"><path d="M20 5.41L18.59 4 7 15.59V9H5v10h10v-2H8.41z"/></svg>
<svg class="ic" style="left:1553.95px" viewBox="0 0 24 24" fill="#f44336"><path d="M6 19c0 1.1.9 2 2 2h8c1.1 0 2-.9 2-2V7H6v12zM19 4h-3.5l-1-1h-5l-1 1H5v2h14V4z"/></svg>
</div>
<div class="row" style="top:691.3px">
<span class="nm">Datastore july31</span>
<span class="dt" style="left:352.7px">Jul, 31, 2024</span>
<span class="dt" style="left:518.7px">Aug, 06, 2024</span>
<span class="av" style="background:#e74c3c">V</span>
<span class="un">vijayaraghavan</span>
<span class="bd">Not Running</span>
<svg class="ic" style="left:1223.95px" viewBox="0 0 24 24" fill="#1272b9"><path transform="translate(-0.72 0.3) scale(1.06 1)" d="M3 17.25V21h3.75L17.81 9.94l-3.75-3.75L3 17.25zM20.71 7.04c.39-.39.39-1.02 0-1.41l-2.34-2.34c-.39-.39-1.02-.39-1.41 0l-1.83 1.83 3.75 3.75 1.83-1.83z"/></svg>
<svg class="ic" style="left:1265.20px" viewBox="0 0 24 24" fill="#1272b9"><path d="M17.65 6.35C16.2 4.9 14.21 4 12 4c-4.42 0-7.99 3.58-7.99 8s3.57 8 7.99 8c3.73 0 6.84-2.55 7.73-6h-2.08c-.82 2.33-3.04 4-5.65 4-3.31 0-6-2.69-6-6s2.69-6 6-6c1.66 0 3.14.69 4.22 1.78L13 11h7V4l-2.35 2.35z"/></svg>
<svg class="ic" style="left:1306.45px" viewBox="0 0 24 24" fill="#1272b9"><path d="M12 2C6.48 2 2 6.48 2 12s4.48 10 10 10 10-4.48 10-10S17.52 2 12 2zm1 15h-2v-6h2v6zm0-8h-2V7h2v2z"/></svg>
<svg class="ic" style="left:1347.70px" viewBox="0 0 24 24" fill="#1272b9"><path d="M18 16.08c-.76 0-1.44.3-1.96.77L8.91 12.7c.05-.23.09-.46.09-.7s-.04-.47-.09-.7l7.05-4.11c.54.5 1.25.81 2.04.81 1.66 0 3-1.34 3-3s-1.34-3-3-3-3 1.34-3 3c0 .24.04.47.09.7L8.04 9.81C7.5 9.31 6.79 9 6 9c-1.66 0-3 1.34-3 3s1.34 3 3 3c.79 0 1.5-.31 2.04-.81l7.12 4.16c-.05.21-.08.43-.08.65 0 1.61 1.31 2.92 2.92 2.92 1.61 0 2.92-1.31 2.92-2.92s-1.31-2.92-2.92-2.92z"/></svg>
<svg class="ic" style="left:1388.95px" viewBox="0 0 24 24" fill="#1272b9"><path d="M12 2C6.48 2 2 6.48 2 12s4.48 10 10 10 10-4.48 10-10S17.52 2 12 2zm5 11h-4v4h-2v-4H7v-2h4V7h2v4h4v2z"/></svg>
<svg class="ic" style="left:1430.20px" viewBox="0 0 24 24" fill="#1272b9"><path d="M14 2H6c-1.1 0-1.99.9-1.99 2L4 20c0 1.1.89 2 1.99 2H18c1.1 0 2-.9 2-2V8l-6-6zm-2 16c-2.05 0-3.81-1.24-4.58-3h1.71c.63.9 1.68 1.5 2.87 1.5 1.93 0 3.5-1.57 3.5-3.5S13.93 9.5 12 9.5c-1.35 0-2.52.78-3.1 1.9l1.6 1.6h-4V9l1.3 1.3C8.69 8.92 10.23 8 12 8c2.76 0 5 2.24 5 5s-2.24 5-5 5z"/></svg>
<svg class="ic" style="left:1471.45px" viewBox="0 0 24 24" fill="#1272b9"><path d="M9 5v2h6.59L4 18.59 5.41 20 17 8.41V15h2V5z"/></svg>
<svg class="ic" style="left:1512.70px" viewBox="0 0 24 24" fill="#1272b9"><path d="M20 5.41L18.59 4 7 15.59V9H5v10h10v-2H8.41z"/></svg>
<svg class="ic" style="left:1553.95px" viewBox="0 0 24 24" fill="#f44336"><path d="M6 19c0 1.1.9 2 2 2h8c1.1 0 2-.9 2-2V7H6v12zM19 4h-3.5l-1-1h-5l-1 1H5v2h14V4z"/></svg>
</div>
</div></div>
<div id="sbt"></div><div id="sbh"></div>
<!-- markers -->
<div id="mk1" class="abs" style="left:111px;top:201px;width:226px;height:36px;border:2.300px solid #f6a80c;border-radius:6px"></div>
<svg class="abs" style="left:0;top:0;width:1834px;height:804px;pointer-events:none" viewBox="0 0 1834 804">
<path d="M93.06 203.32Q102.00 208.40 113.00 216.30Q102.00 224.20 93.06 229.28A15.500 15.500 0 1 1 93.06 203.32z" fill="#f6a80c"/>
<path d="M1366.86 187.22Q1375.80 192.30 1386.80 200.20Q1375.80 208.10 1366.86 213.18A15.500 15.500 0 1 1 1366.86 187.22z" fill="#f6a80c"/>
<circle cx="1382.600" cy="221" r="15.200" fill="#fff" stroke="#f6a80c" stroke-width="4.800"/>
<g transform="translate(1370.800,209.150) scale(1.04167)"><path fill="#1272b9" d="M17.650 6.350C16.200 4.900 14.210 4 12 4c-4.420 0-7.990 3.580-7.990 8s3.570 8 7.990 8c3.730 0 6.840-2.550 7.730-6h-2.080c-.82 2.330-3.040 4-5.650 4-3.310 0-6-2.690-6-6s2.690-6 6-6c1.660 0 3.140.69 4.220 1.780L13 11h7V4l-2.350 2.350z"/></g>
</svg>
<div class="mkn" style="left:66px;top:199px">1</div>
<div class="mkn" style="left:1340px;top:183px">2</div>
<div id="pg">
<span style="left:1354.500px;top:766px;letter-spacing:.17px">Items per page:</span>
<span style="left:1469px;top:766px;color:#222">10</span>
<div class="abs" style="left:1468px;top:790.600px;width:70px;height:1px;background:#8a8a8a"></div>
<svg class="abs" style="left:1521px;top:772px;width:12px;height:6px" viewBox="0 0 12 6"><path d="M0 0h12L6 6z" fill="#666"/></svg>
<span style="left:1583.500px;top:765px;letter-spacing:.4px">1 – 10 of 663</span>
<svg class="abs" style="left:1722px;top:761px;width:32px;height:32px" viewBox="0 0 24 24" fill="#bdbdbd"><path d="M15.410 7.410L14 6l-6 6 6 6 1.410-1.410L10.830 12z"/></svg>
<svg class="abs" style="left:1773px;top:761px;width:32px;height:32px" viewBox="0 0 24 24" fill="#555"><path d="M10 6L8.590 7.410 13.170 12l-4.580 4.590L10 18l6-6z"/></svg>
</div>
</body></html>
